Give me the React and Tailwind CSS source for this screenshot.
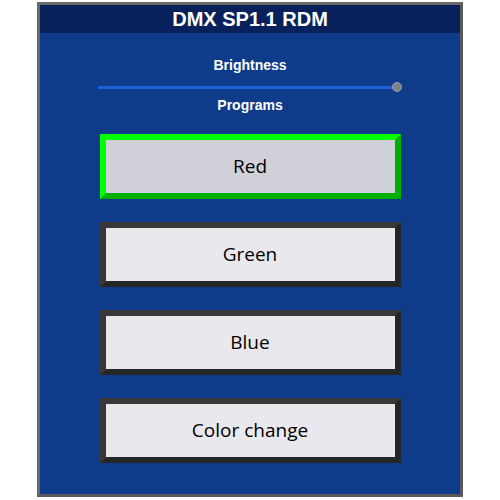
export default function App() {
  const items = [
    { label: "Red", active: true },
    { label: "Green" },
    { label: "Blue" },
    { label: "Color change" },
  ];
  return (
    <div className="w-[500px] h-[500px] bg-white pt-[2px] pl-[37px]">
      <div className="w-[426px] h-[495px] border-[3px] border-t-[#6a6a6a] border-l-[#6a6a6a] border-b-[#5a5a5a] border-r-[#5a5a5a] bg-[#0f3b8b] flex flex-col items-center">
        <div
          className="w-full h-[28px] bg-[#08215c] flex items-center justify-center text-white font-bold text-[20px] leading-none"
          style={{ fontFamily: '"Liberation Sans", Arial, sans-serif' }}
        >
          DMX SP1.1 RDM
        </div>
        <div
          className="mt-[24px] text-white font-bold text-[14px] leading-[16px]"
          style={{ fontFamily: '"Liberation Sans", Arial, sans-serif' }}
        >
          Brightness
        </div>
        <div className="mt-[9px] w-[304px] h-[10px] flex items-center">
          <div className="flex-1 h-[3px] bg-[#1c62dc]" />
          <div className="w-[10px] h-[10px] rounded-full bg-[#7f7f86] border border-[#a0a0a8] -ml-[4px]" />
        </div>
        <div
          className="mt-[5px] text-white font-bold text-[14px] leading-[16px]"
          style={{ fontFamily: '"Liberation Sans", Arial, sans-serif' }}
        >
          Programs
        </div>
        <div className="mt-[21px] flex flex-col gap-[23px]">
          {items.map((it) => (
            <div
              key={it.label}
              className={
                it.active
                  ? "w-[301px] h-[65px] border-[6px] border-t-[#00ff00] border-l-[#00ff00] border-b-[#00b000] border-r-[#00b000] bg-[#d0d0d8] flex items-center justify-center text-black text-[19px]"
                  : "w-[301px] h-[65px] border-[6px] border-t-[#383838] border-l-[#383838] border-b-[#262626] border-r-[#262626] bg-[#e8e8ed] flex items-center justify-center text-black text-[19px]"
              }
              style={{ fontFamily: '"Open Sans", "DejaVu Sans", sans-serif' }}
            >
              {it.label}
            </div>
          ))}
        </div>
      </div>
    </div>
  );
}
